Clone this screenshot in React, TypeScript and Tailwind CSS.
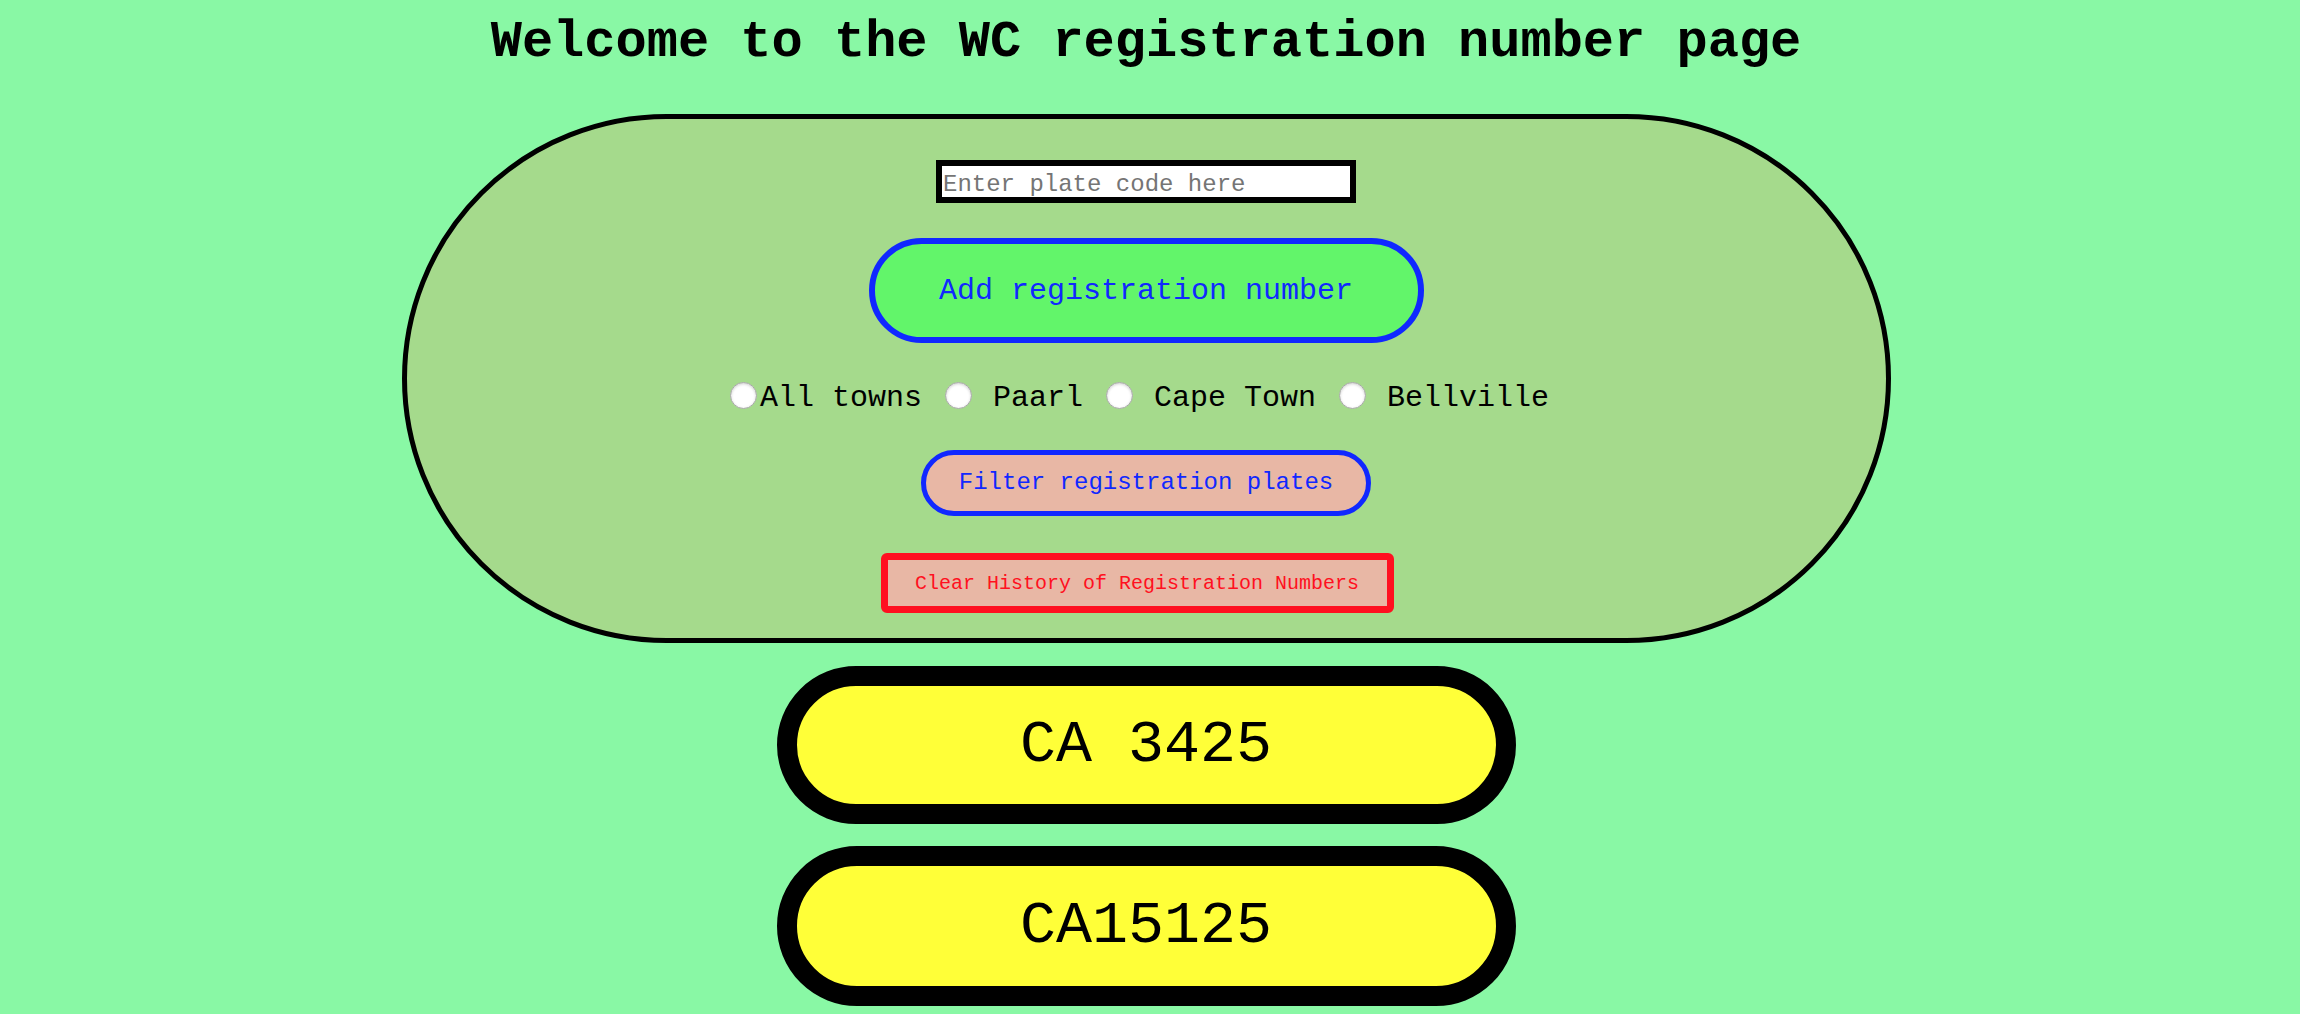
import React from "react";

function Radio() {
  return (
    <input
      type="radio"
      name="town"
      className="appearance-none w-[27px] h-[27px] ml-[5px] mr-[3px] rounded-full bg-white border border-[#a8a8a8] shadow-[inset_0_1px_3px_rgba(0,0,0,0.2)] shrink-0"
    />
  );
}

export default function App() {
  return (
    <div className="min-h-screen bg-[#89f8a5] pr-[8px] flex flex-col items-center font-['Liberation_Mono','Courier_New',monospace] text-black">
      <h1 className="mt-[14px] text-[52px] leading-[58px] font-bold whitespace-pre">
        Welcome to the WC registration number page
      </h1>

      <div className="mt-[42px] w-[1489px] h-[529px] border-[5px] border-black rounded-[300px] bg-[#a5da8c] flex flex-col items-center pt-[41px]">
        <input
          type="text"
          placeholder="Enter plate code here"
          className="w-[420px] h-[43px] border-[6px] border-black bg-white px-[1px] pt-[6px] pb-0 text-[24px] leading-[24px] outline-none placeholder:text-[#757575]"
        />

        <button className="mt-[35px] w-[555px] h-[105px] border-[6px] border-[#1028ff] rounded-full bg-[#62f56a] text-[#1028ff] text-[30px] leading-[34px] flex items-center justify-center">
          Add registration number
        </button>

        <div className="mt-[39px] h-[27px] flex items-center text-[30px] leading-[34px] whitespace-pre">
          <Radio />
          <span className="mt-[5px]">All towns </span>
          <Radio />
          <span className="mt-[5px]"> Paarl </span>
          <Radio />
          <span className="mt-[5px]"> Cape Town </span>
          <Radio />
          <span className="mt-[5px]"> Bellville </span>
        </div>

        <button className="mt-[41px] w-[450px] h-[66px] border-[5px] border-[#1028ff] rounded-full bg-[#e8b7a5] text-[#1028ff] text-[24px] leading-[28px] flex items-center justify-center">
          Filter registration plates
        </button>

        <button className="mt-[37px] mr-[18px] w-[513px] h-[60px] border-[7px] border-[#ff1020] rounded-[6px] bg-[#e8b7a5] text-[#ff1020] text-[20px] leading-[23px] flex items-center justify-center">
          Clear History of Registration Numbers
        </button>
      </div>

      <div className="mt-[23px] w-[739px] h-[158px] border-[20px] border-black rounded-full bg-[#ffff38] flex items-center justify-center text-[60px] leading-[68px] whitespace-pre">
        CA 3425
      </div>
      <div className="mt-[22px] w-[739px] h-[160px] border-[20px] border-black rounded-full bg-[#ffff38] flex items-center justify-center text-[60px] leading-[68px] whitespace-pre">
        CA15125
      </div>
    </div>
  );
}
